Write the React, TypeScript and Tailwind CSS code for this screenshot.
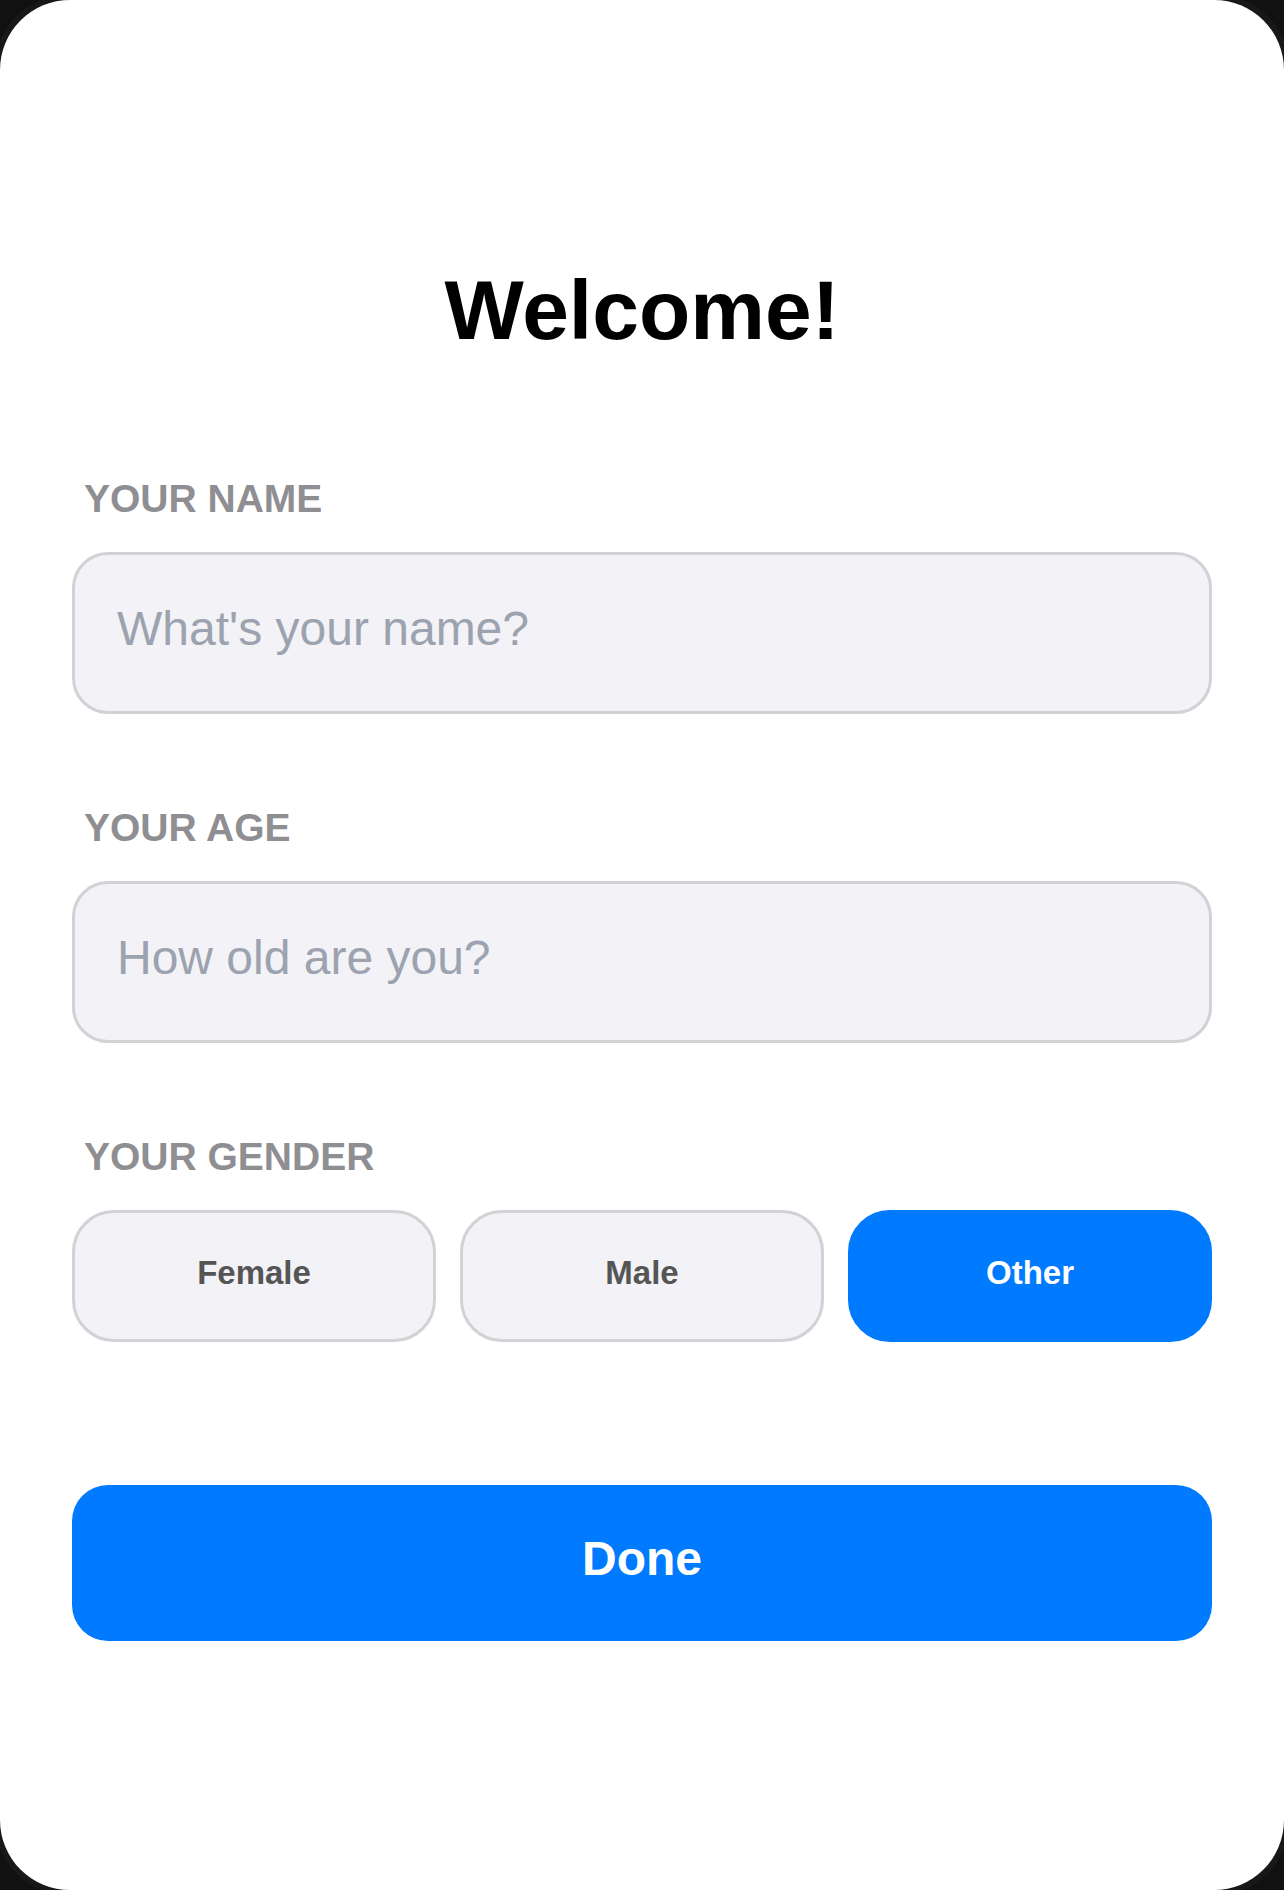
import { useState } from 'react'
import type { FormEvent } from 'react'

const genders = ['Female', 'Male', 'Other']

const labelClass = 'block pl-3 text-[39px] leading-[48px] font-bold text-[#8e8e93]'

const inputClass =
  'mt-[29px] block w-full rounded-[36px] border-3 border-[#d1d1d6] bg-[#f2f2f7] px-[42px] pt-[46px] pb-[54px] text-5xl leading-[56px] text-black outline-none placeholder:text-[#9ca3af]'

interface FieldProps {
  id: string
  label: string
  placeholder: string
  value: string
  onChange: (value: string) => void
  inputMode?: 'text' | 'numeric'
}

function Field({ id, label, placeholder, value, onChange, inputMode = 'text' }: FieldProps) {
  return (
    <div>
      <label htmlFor={id} className={labelClass}>
        {label}
      </label>
      <input
        id={id}
        type="text"
        inputMode={inputMode}
        value={value}
        placeholder={placeholder}
        onChange={(e) => onChange(e.target.value)}
        className={inputClass}
      />
    </div>
  )
}

export default function App() {
  const [name, setName] = useState('')
  const [age, setAge] = useState('')
  const [gender, setGender] = useState('Other')

  const handleSubmit = (e: FormEvent) => {
    e.preventDefault()
  }

  return (
    <div className="flex min-h-screen flex-col bg-[#111111] font-['Liberation_Sans',Arial,sans-serif]">
      <main className="flex-1 rounded-[70px] bg-white px-[72px] pt-[262px] pb-24 ring-6 ring-[#181818]">
        <h1 className="text-center text-[84px] leading-[96px] font-bold text-black">Welcome!</h1>

        <form onSubmit={handleSubmit} className="mt-[117px]">
          <div className="flex flex-col gap-[90px]">
            <Field
              id="name"
              label="YOUR NAME"
              placeholder="What's your name?"
              value={name}
              onChange={setName}
            />
            <Field
              id="age"
              label="YOUR AGE"
              placeholder="How old are you?"
              value={age}
              onChange={setAge}
              inputMode="numeric"
            />

            <div role="group" aria-labelledby="gender-label">
              <span id="gender-label" className={labelClass}>
                YOUR GENDER
              </span>
              <div className="mt-[29px] grid grid-cols-3 gap-6">
                {genders.map((option) => (
                  <button
                    key={option}
                    type="button"
                    aria-pressed={gender === option}
                    onClick={() => setGender(option)}
                    className={`rounded-[42px] border-3 pt-[42px] pb-12 text-[33px] leading-9 font-bold ${
                      gender === option
                        ? 'border-[#007aff] bg-[#007aff] text-white'
                        : 'border-[#d1d1d6] bg-[#f2f2f7] text-[#555555]'
                    }`}
                  >
                    {option}
                  </button>
                ))}
              </div>
            </div>
          </div>

          <button
            type="submit"
            className="mt-[143px] block w-full rounded-[36px] bg-[#007aff] pt-[46px] pb-[54px] text-5xl leading-[56px] font-bold text-white"
          >
            Done
          </button>
        </form>
      </main>
    </div>
  )
}
